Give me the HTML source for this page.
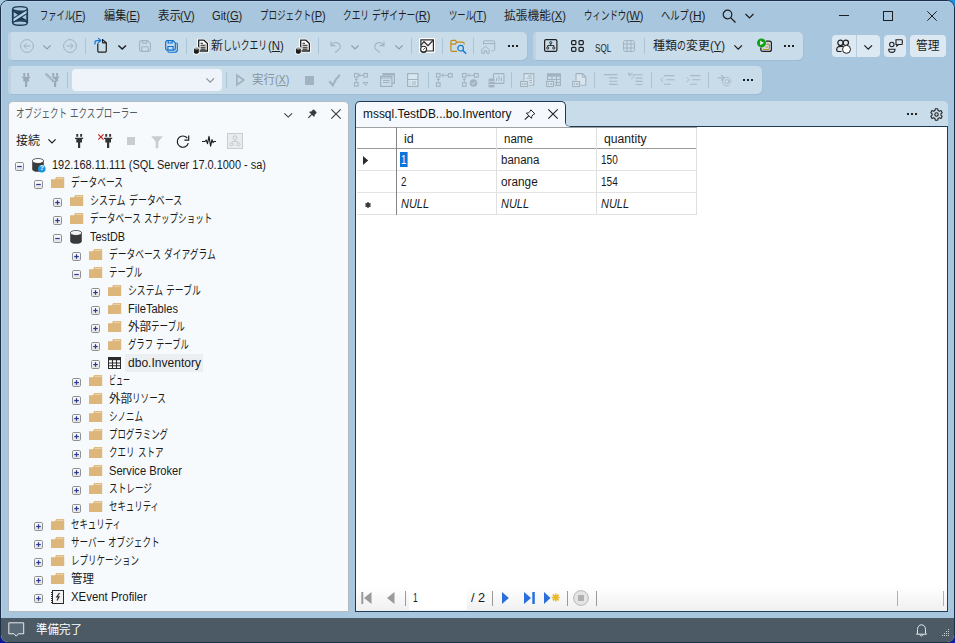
<!DOCTYPE html>
<html lang="ja"><head><meta charset="utf-8"><title>SSMS</title><style>
html,body{margin:0;padding:0}
body{width:955px;height:643px;overflow:hidden;position:relative;background:#a8c6dd;font-family:"Liberation Sans","Noto Sans CJK JP",sans-serif;}
.a{position:absolute;box-sizing:border-box}
.t{position:absolute;white-space:pre;line-height:16px;transform-origin:0 0}
u{text-decoration:underline;text-underline-offset:1px}
svg{overflow:visible}
</style></head><body>
<div class="a" style="left:0px;top:0px;width:955px;height:643px;background:#a8c8e2;"></div>
<div class="a" style="left:940px;top:0px;width:15px;height:15px;background:#1e90e2;"></div>
<div class="a" style="left:0px;top:628px;width:15px;height:15px;background:#0b1a9c;"></div>
<div class="a" style="left:940px;top:628px;width:15px;height:15px;background:#1c1c9e;"></div>
<div class="a" style="left:0px;top:0px;width:955px;height:643px;background:#a8c6dd;border:1px solid #1b3046;border-radius:8px;"></div>
<div class="a" style="left:1px;top:1px;width:953px;height:641px;border:1px solid #b4d2ea;border-radius:7px;border-right-color:#a8c6dd;border-bottom:none"></div>
<div class="a" style="left:1px;top:618px;width:953px;height:24px;background:#4b5a65;border-radius:0 0 7px 7px;"></div>
<svg class="a" style="left:11px;top:5px;" width="18" height="22" viewBox="0 0 18 22">
<path d="M1.700 3.900V18M16.300 3.900V18" stroke="#1d3c55" stroke-width="1.500"/>
<ellipse cx="9" cy="3.900" rx="7.300" ry="2.300" fill="none" stroke="#1d3c55" stroke-width="1.400"/>
<ellipse cx="9" cy="18" rx="7.300" ry="2.300" fill="none" stroke="#1d3c55" stroke-width="1.400"/>
<path d="M2 5.500C4 6.800 14 6.800 16 5.500L16 6.700L9 10.900L2 6.700z" fill="#1d3c55"/>
<path d="M2 16.400C4 15.100 14 15.100 16 16.400L16 15.200L9 10.900L2 15.200z" fill="#1d3c55"/>
<path d="M2 15.300L16 6.600" stroke="#1d3c55" stroke-width="4.400"/>
<path d="M1 15.900L17 6" stroke="#b4d3ea" stroke-width="2.300"/>
<path d="M1.700 3.900V18M16.300 3.900V18" stroke="#1d3c55" stroke-width="1.500"/>
</svg>
<span class="t" style="left:39.50px;top:8.14px;font-size:12px;color:#1e1e1e;transform:scaleX(0.6867);">ファイル</span><span class="t" style="left:72.47px;top:8.14px;font-size:12px;color:#1e1e1e;transform:scaleX(0.8816);">(<u>F</u>)</span>
<span class="t" style="left:103.50px;top:8.14px;font-size:12px;color:#1e1e1e;transform:scaleX(0.9304);">編集</span><span class="t" style="left:125.84px;top:8.14px;font-size:12px;color:#1e1e1e;transform:scaleX(0.8839);">(<u>E</u>)</span>
<span class="t" style="left:157.50px;top:8.14px;font-size:12px;color:#1e1e1e;transform:scaleX(0.9559);">表示</span><span class="t" style="left:180.46px;top:8.14px;font-size:12px;color:#1e1e1e;transform:scaleX(0.9081);">(<u>V</u>)</span>
<span class="t" style="left:212.00px;top:8.14px;font-size:12px;color:#1e1e1e;transform:scaleX(0.9270);">Git(<u>G</u>)</span>
<span class="t" style="left:259.50px;top:8.14px;font-size:12px;color:#1e1e1e;transform:scaleX(0.7118);">プロジェクト</span><span class="t" style="left:310.76px;top:8.14px;font-size:12px;color:#1e1e1e;transform:scaleX(0.9139);">(<u>P</u>)</span>
<span class="t" style="left:342.50px;top:8.14px;font-size:12px;color:#1e1e1e;transform:scaleX(0.7236);">クエリ</span><span class="t" style="left:368.56px;top:8.14px;font-size:12px;color:#1e1e1e;transform:scaleX(0.9289);"> </span><span class="t" style="left:371.67px;top:8.14px;font-size:12px;color:#1e1e1e;transform:scaleX(0.7236);">デザイナー</span><span class="t" style="left:414.91px;top:8.14px;font-size:12px;color:#1e1e1e;transform:scaleX(0.9289);">(<u>R</u>)</span>
<span class="t" style="left:448.50px;top:8.14px;font-size:12px;color:#1e1e1e;transform:scaleX(0.6910);">ツール</span><span class="t" style="left:473.39px;top:8.14px;font-size:12px;color:#1e1e1e;transform:scaleX(0.8871);">(<u>T</u>)</span>
<span class="t" style="left:504.30px;top:8.14px;font-size:12px;color:#1e1e1e;transform:scaleX(0.9758);">拡張機能</span><span class="t" style="left:551.15px;top:8.14px;font-size:12px;color:#1e1e1e;transform:scaleX(0.9270);">(<u>X</u>)</span>
<span class="t" style="left:583.50px;top:8.14px;font-size:12px;color:#1e1e1e;transform:scaleX(0.7049);">ウィンドウ</span><span class="t" style="left:625.81px;top:8.14px;font-size:12px;color:#1e1e1e;transform:scaleX(0.9050);">(<u>W</u>)</span>
<span class="t" style="left:661.00px;top:8.14px;font-size:12px;color:#1e1e1e;transform:scaleX(0.7715);">ヘルプ</span><span class="t" style="left:688.79px;top:8.14px;font-size:12px;color:#1e1e1e;transform:scaleX(0.9905);">(<u>H</u>)</span>
<svg class="a" style="left:722px;top:9px;" width="15" height="15" viewBox="0 0 15 15"><circle cx="5.500" cy="5.500" r="4.300" fill="none" stroke="#1e1e1e" stroke-width="1.200"/><path d="M8.600 8.600L13.500 13.500" stroke="#1e1e1e" stroke-width="1.300"/></svg>
<svg class="a" style="left:745px;top:13px;" width="9" height="6" viewBox="0 0 9 6"><path d="M.5 1l4 4 4-4" fill="none" stroke="#1e1e1e" stroke-width="1.200"/></svg>
<div class="a" style="left:839px;top:15px;width:10px;height:1px;background:#1e1e1e;"></div>
<div class="a" style="left:883px;top:11px;width:10px;height:10px;border:1px solid #1e1e1e"></div>
<svg class="a" style="left:927px;top:11px;" width="10" height="10" viewBox="0 0 10 10"><path d="M.3 .3L9.700 9.700M9.700 .3L.3 9.700" stroke="#1e1e1e" stroke-width="1"/></svg>
<div class="a" style="left:8px;top:32px;width:519px;height:28px;background:#c9dcea;border-radius:5px;box-shadow:.5px 1px 0 #9ebbd3;"></div>
<div class="a" style="left:8px;top:32px;width:3px;height:28px;background:#bed2e2;border-radius:5px 0 0 5px;"></div>
<div class="a" style="left:533px;top:32px;width:270px;height:28px;background:#c9dcea;border-radius:5px;box-shadow:.5px 1px 0 #9ebbd3;"></div>
<div class="a" style="left:533px;top:32px;width:3px;height:28px;background:#bed2e2;border-radius:5px 0 0 5px;"></div>
<svg class="a" style="left:20px;top:39px;" width="14" height="14" viewBox="0 0 14 14"><circle cx="7" cy="7" r="6.400" fill="none" stroke="#a2b2bf" stroke-width="1"/><path d="M10.500 7H4M6.500 4.300L3.800 7l2.700 2.700" fill="none" stroke="#a2b2bf" stroke-width="1"/></svg>
<svg class="a" style="left:43px;top:44.5px;" width="8" height="4.5" viewBox="0 0 8 4.5"><path d="M.4 .4L4.0 4.0L7.6 .4" fill="none" stroke="#8d9dab" stroke-width="1.2"/></svg>
<svg class="a" style="left:63px;top:39px;" width="14" height="14" viewBox="0 0 14 14"><circle cx="7" cy="7" r="6.400" fill="none" stroke="#a2b2bf" stroke-width="1"/><path d="M3.500 7H10M7.500 4.300L10.200 7l-2.700 2.700" fill="none" stroke="#a2b2bf" stroke-width="1"/></svg>
<div class="a" style="left:85px;top:38px;width:1px;height:16px;background:#adc2d3;"></div>
<svg class="a" style="left:93px;top:37px;" width="15" height="16" viewBox="0 0 15 16"><path d="M4.800 6.400V14.100a1 1 0 0 0 1 1H12.300a1 1 0 0 0 1-1V5.800L9.500 2.600H8.900" fill="none" stroke="#1e1e1e" stroke-width="1.200"/><path d="M9.500 2.700V4.900a.9 .9 0 0 0 .9 .9H13.200" fill="none" stroke="#1e1e1e" stroke-width="1.200"/>
<path d="M2 6.900V5.300C2 4.100 2.800 3.500 4 3.500H7.500M5.400 1.400L7.700 3.500L5.400 5.600" fill="none" stroke="#1477d4" stroke-width="1.250" stroke-linecap="round" stroke-linejoin="round"/></svg>
<svg class="a" style="left:118px;top:44.5px;" width="8.4" height="4.6" viewBox="0 0 8.4 4.6"><path d="M.4 .4L4.2 4.1L8.0 .4" fill="none" stroke="#1e1e1e" stroke-width="1.4"/></svg>
<svg class="a" style="left:138.7px;top:40.2px;" width="12" height="12" viewBox="0 0 12 12"><path d="M.6 2.400a1.800 1.800 0 0 1 1.800-1.800H8.600L11.400 3.400V9.600a1.800 1.800 0 0 1-1.800 1.800H2.400a1.800 1.800 0 0 1-1.800-1.800z" fill="none" stroke="#a3b3c0" stroke-width="1.1"/><path d="M3.600 .8V3.200H7.600V.8M2.800 11.200V7.300a.6 .6 0 0 1 .6-.6H8.600a.6 .6 0 0 1 .6 .6V11.200" fill="none" stroke="#a3b3c0" stroke-width="1.1"/></svg>
<svg class="a" style="left:164.7px;top:39.6px;" width="13" height="13" viewBox="0 0 13 13"><path d="M.7 2.200a1.600 1.600 0 0 1 1.600-1.600H8L10.300 2.900V8.600a1.600 1.600 0 0 1-1.600 1.600H2.300a1.600 1.600 0 0 1-1.600-1.600z" fill="none" stroke="#0f6fd0" stroke-width="1.200"/><path d="M3.200 .8V3H7.200V.8M2.900 10V6.500H8.100V10" fill="none" stroke="#0f6fd0" stroke-width="1.100"/><path d="M2.600 11.400c.4 .6 1 .9 1.700 .9H9.700a2.600 2.600 0 0 0 2.600-2.600V4.300c0-.6-.3-1.200-.8-1.600" fill="none" stroke="#0f6fd0" stroke-width="1.100"/></svg>
<div class="a" style="left:186px;top:38px;width:1px;height:16px;background:#adc2d3;"></div>
<svg class="a" style="left:193px;top:38.5px;" width="16" height="16" viewBox="0 0 16 16"><path d="M4.600 .5H11.300L15.300 4.300V12.800H4.600z" fill="#fff" stroke="#fff" stroke-width="1.400"/>
<path d="M5.700 1.200H11L14.400 4.500V12H5.700z" fill="#fff" stroke="#1e1e1e" stroke-width="1.300"/>
<path d="M7.500 4.300H10M7.500 6.300H12.600M7.500 8.200H12.600M7.500 10.100H12.600" stroke="#1e1e1e" stroke-width="1.100"/>
<path d="M.6 9.300v4.300c0 .9 1.200 1.500 2.700 1.500s2.700-.6 2.700-1.500V9.300" fill="#1e1e1e" stroke="#fff" stroke-width="1.100"/>
<ellipse cx="3.300" cy="9.300" rx="2.700" ry="1.400" fill="#9a9a9a" stroke="#fff" stroke-width=".8"/>
<path d="M.9 9.800v3.800c0 .7 1 1.200 2.400 1.200s2.400-.5 2.400-1.200V9.800c-.5 .5-1.300 .8-2.400 .8S1.400 10.300 .9 9.800z" fill="#1e1e1e"/></svg>
<span class="t" style="left:211.40px;top:38.44px;font-size:12px;color:#1e1e1e;transform:scaleX(0.9949);">新</span><span class="t" style="left:223.35px;top:38.44px;font-size:12px;color:#1e1e1e;transform:scaleX(0.7363);">しいクエリ</span><span class="t" style="left:267.54px;top:38.44px;font-size:12px;color:#1e1e1e;transform:scaleX(0.9452);">(<u>N</u>)</span>
<svg class="a" style="left:295px;top:38.5px;" width="16" height="16" viewBox="0 0 16 16"><path d="M4.600 .5H11.300L15.300 4.300V12.800H4.600z" fill="#fff" stroke="#fff" stroke-width="1.400"/>
<path d="M5.700 1.200H11L14.400 4.500V12H5.700z" fill="#fff" stroke="#1e1e1e" stroke-width="1.300"/>
<path d="M7.500 4.300H10M7.500 6.300H12.600M7.500 8.200H12.600M7.500 10.100H12.600" stroke="#1e1e1e" stroke-width="1.100"/>
<path d="M.6 9.300v4.300c0 .9 1.200 1.500 2.700 1.500s2.700-.6 2.700-1.500V9.300" fill="#1e1e1e" stroke="#fff" stroke-width="1.100"/>
<ellipse cx="3.300" cy="9.300" rx="2.700" ry="1.400" fill="#9a9a9a" stroke="#fff" stroke-width=".8"/>
<path d="M.9 9.800v3.800c0 .7 1 1.200 2.400 1.200s2.400-.5 2.400-1.200V9.800c-.5 .5-1.300 .8-2.400 .8S1.400 10.300 .9 9.800z" fill="#1e1e1e"/></svg>
<div class="a" style="left:318px;top:38px;width:1px;height:16px;background:#adc2d3;"></div>
<svg class="a" style="left:329.5px;top:39.5px;" width="12" height="13" viewBox="0 0 12 13"><path d="M1 1.200V5.600H5.400" fill="none" stroke="#a2b2bf" stroke-width="1.100"/><path d="M1.200 5.400C3 2.600 6 1.800 8.300 3.200c2.400 1.500 2.600 4.400 .7 6.200L5.200 12.500" fill="none" stroke="#a2b2bf" stroke-width="1.100"/></svg>
<svg class="a" style="left:350.7px;top:44.5px;" width="8" height="4.5" viewBox="0 0 8 4.5"><path d="M.4 .4L4.0 4.0L7.6 .4" fill="none" stroke="#8d9dab" stroke-width="1.2"/></svg>
<svg class="a" style="left:372.5px;top:39.5px;" width="12" height="13" viewBox="0 0 12 13"><path d="M11 1.200V5.600H6.600" fill="none" stroke="#a2b2bf" stroke-width="1.100"/><path d="M10.800 5.400C9 2.600 6 1.800 3.700 3.200c-2.400 1.500-2.600 4.400-.7 6.200L6.800 12.500" fill="none" stroke="#a2b2bf" stroke-width="1.100"/></svg>
<svg class="a" style="left:394.7px;top:44.5px;" width="8" height="4.5" viewBox="0 0 8 4.5"><path d="M.4 .4L4.0 4.0L7.6 .4" fill="none" stroke="#8d9dab" stroke-width="1.2"/></svg>
<div class="a" style="left:411px;top:38px;width:1px;height:16px;background:#adc2d3;"></div>
<svg class="a" style="left:419px;top:38px;" width="16" height="16" viewBox="0 0 16 16"><rect x="0" y="0" width="16" height="15" rx="1" fill="#fff"/>
<path d="M1.900 9V1.900H14.400V13H8" fill="#f6f6f6" stroke="#2a2a2a" stroke-width="1.200"/>
<path d="M1.900 7.200L5 3.700L9 7.600L13.900 2.500" fill="none" stroke="#2a2a2a" stroke-width="1.200"/>
<circle cx="4.600" cy="11.300" r="3" fill="#fff" stroke="#2a2a2a" stroke-width="1.100"/><path d="M2 12.800C3 14.800 6.200 14.800 7.200 12.800" fill="none" stroke="#2a2a2a" stroke-width="1.400"/><path d="M4.300 11.700L5.800 10.200" stroke="#2a2a2a" stroke-width="1"/></svg>
<div class="a" style="left:442px;top:38px;width:1px;height:16px;background:#adc2d3;"></div>
<svg class="a" style="left:449.5px;top:39px;" width="17" height="15" viewBox="0 0 17 15"><path d="M.9 11V2.600a1.300 1.300 0 0 1 1.300-1.300H5.300L6.800 3.200H12.800a1.300 1.300 0 0 1 1.300 1.300V5.600M.9 5.100H5.200L6.700 3.300M.9 11a1.300 1.300 0 0 0 1.300 1.300H7" fill="none" stroke="#c28a12" stroke-width="1.200"/>
<circle cx="10.600" cy="9.200" r="2.800" fill="none" stroke="#1477d4" stroke-width="1.200"/><path d="M12.700 11.300L16.200 14.700" stroke="#1477d4" stroke-width="1.400"/></svg>
<div class="a" style="left:473px;top:38px;width:1px;height:16px;background:#adc2d3;"></div>
<svg class="a" style="left:481px;top:40px;" width="15" height="14" viewBox="0 0 15 14"><path d="M2.500 4.500V2a1.200 1.200 0 0 1 1.200-1.200H12.500A1.200 1.200 0 0 1 13.700 2V9.500a1.200 1.200 0 0 1-1.200 1.200H10.500M2.500 3.600H13.700" fill="none" stroke="#a2b2bf" stroke-width="1"/><path d="M.8 9.500L4.500 6.300L8.200 9.500V13.300H5.700V10.800H3.300V13.300H.8z" fill="none" stroke="#a2b2bf" stroke-width="1"/></svg>
<div class="a" style="left:508px;top:45px;width:2px;height:2px;background:#1e1e1e;"></div>
<div class="a" style="left:512px;top:45px;width:2px;height:2px;background:#1e1e1e;"></div>
<div class="a" style="left:516px;top:45px;width:2px;height:2px;background:#1e1e1e;"></div>
<svg class="a" style="left:544px;top:39px;" width="14" height="13" viewBox="0 0 14 13"><rect x=".6" y=".6" width="12.300" height="11.800" rx="1.500" fill="none" stroke="#1e1e1e" stroke-width="1.200"/>
<circle cx="6.750" cy="3.700" r="1.100" fill="none" stroke="#1e1e1e" stroke-width=".9"/><circle cx="3.700" cy="9" r="1.100" fill="none" stroke="#1e1e1e" stroke-width=".9"/><circle cx="9.800" cy="9" r="1.100" fill="none" stroke="#1e1e1e" stroke-width=".9"/>
<path d="M6.750 4.800V6.500M3.700 7.900V6.500H9.800V7.900" fill="none" stroke="#1e1e1e" stroke-width=".9"/></svg>
<svg class="a" style="left:570.5px;top:40.2px;" width="13" height="12" viewBox="0 0 13 12"><rect x=".6" y=".6" width="4.300" height="4" rx="1" fill="none" stroke="#1e1e1e" stroke-width="1.200"/><rect x="8" y=".6" width="4.300" height="4" rx="1" fill="none" stroke="#1e1e1e" stroke-width="1.200"/><rect x=".6" y="7.300" width="4.300" height="4" rx="1" fill="none" stroke="#1e1e1e" stroke-width="1.200"/><rect x="8" y="7.300" width="4.300" height="4" rx="1" fill="none" stroke="#1e1e1e" stroke-width="1.200"/></svg>
<span class="t" style="left:594.70px;top:40.16px;font-size:10.5px;color:#1e1e1e;transform:scaleX(0.7756);">SQL</span>
<svg class="a" style="left:623px;top:40.2px;" width="12" height="12" viewBox="0 0 12 12"><rect x=".5" y=".5" width="11" height="11" rx="2" fill="none" stroke="#a2b2bf" stroke-width="1"/><path d="M4 .5V11.500M8 .5V11.500M.5 4H11.500M.5 8H11.500" stroke="#a2b2bf" stroke-width="1"/></svg>
<div class="a" style="left:644px;top:38px;width:1px;height:16px;background:#adc2d3;"></div>
<span class="t" style="left:653.20px;top:38.44px;font-size:12px;color:#1e1e1e;transform:scaleX(0.9953);">種類</span><span class="t" style="left:677.10px;top:38.44px;font-size:12px;color:#1e1e1e;transform:scaleX(0.7365);">の</span><span class="t" style="left:685.95px;top:38.44px;font-size:12px;color:#1e1e1e;transform:scaleX(0.9953);">変更</span><span class="t" style="left:709.86px;top:38.44px;font-size:12px;color:#1e1e1e;transform:scaleX(0.9456);">(<u>Y</u>)</span>
<svg class="a" style="left:734px;top:44.5px;" width="8.4" height="4.6" viewBox="0 0 8.4 4.6"><path d="M.4 .4L4.2 4.1L8.0 .4" fill="none" stroke="#1e1e1e" stroke-width="1.3"/></svg>
<svg class="a" style="left:757px;top:37.5px;" width="17" height="15" viewBox="0 0 17 15"><path d="M9 3.100H12.400a2 2 0 0 1 2 2V11.400a2 2 0 0 1-2 2H5.800a2 2 0 0 1-2-2V9.500" fill="none" stroke="#1e1e1e" stroke-width="1.200"/>
<path d="M9.500 6.100H11.200a1.200 1.200 0 0 1 1.200 1.200V10a1.500 1.500 0 0 1-1.500 1.500H7.200a1.500 1.500 0 0 1-1.300-.8M8.500 9H10.800" fill="none" stroke="#c28a12" stroke-width="1.100"/>
<circle cx="4.500" cy="4.900" r="4.500" fill="#12a01a"/><path d="M3.100 2.600V7.200L7 4.900z" fill="#e4f0e4"/></svg>
<div class="a" style="left:784px;top:45px;width:2px;height:2px;background:#1e1e1e;"></div>
<div class="a" style="left:788px;top:45px;width:2px;height:2px;background:#1e1e1e;"></div>
<div class="a" style="left:792px;top:45px;width:2px;height:2px;background:#1e1e1e;"></div>
<div class="a" style="left:832px;top:35px;width:48px;height:22px;background:#dde9f2;border-radius:4px;"></div>
<div class="a" style="left:856px;top:35px;width:1px;height:22px;background:#b9cddc;"></div>
<div class="a" style="left:884px;top:35px;width:22px;height:22px;background:#dde9f2;border-radius:4px;"></div>
<div class="a" style="left:910px;top:35px;width:36px;height:22px;background:#dde9f2;border-radius:4px;"></div>
<svg class="a" style="left:836px;top:39px;" width="16" height="15" viewBox="0 0 16 15"><circle cx="4.500" cy="3.800" r="2.700" fill="none" stroke="#1e1e1e" stroke-width="1.200"/><circle cx="9.800" cy="3.800" r="2.700" fill="none" stroke="#1e1e1e" stroke-width="1.200"/>
<path d="M5.500 12.500H2.500A1.800 1.800 0 0 1 .7 10.700C.7 8.500 2 7.300 4.500 7.300H7" fill="none" stroke="#1e1e1e" stroke-width="1.200"/>
<circle cx="10.500" cy="10.300" r="4" fill="#fff" stroke="#1e1e1e" stroke-width="1"/></svg>
<svg class="a" style="left:864px;top:44.5px;" width="8.4" height="4.6" viewBox="0 0 8.4 4.6"><path d="M.4 .4L4.2 4.1L8.0 .4" fill="none" stroke="#1e1e1e" stroke-width="1.3"/></svg>
<svg class="a" style="left:888px;top:39px;" width="15" height="14" viewBox="0 0 15 14"><circle cx="3.800" cy="5.500" r="2.200" fill="none" stroke="#1e1e1e" stroke-width="1.100"/><path d="M.7 10.200H7c0 2-1.300 3.200-3.150 3.200S.7 12.200 .7 10.200z" fill="none" stroke="#1e1e1e" stroke-width="1.100"/>
<path d="M8 .7H13.500a.8 .8 0 0 1 .8 .8V4.700a.8 .8 0 0 1-.8 .8H10.500L8.800 7V5.500H8z" fill="none" stroke="#1e1e1e" stroke-width="1.100"/></svg>
<span class="t" style="left:916.00px;top:38.44px;font-size:12px;color:#1e1e1e;transform:scaleX(0.9785);">管理</span>
<div class="a" style="left:8px;top:66px;width:754px;height:28px;background:#c9dcea;border-radius:5px;box-shadow:.5px 1px 0 #9ebbd3;"></div>
<div class="a" style="left:8px;top:66px;width:3px;height:28px;background:#bed2e2;border-radius:5px 0 0 5px;"></div>
<svg class="a" style="left:21.9px;top:73.2px;" width="8.2" height="14" viewBox="0 0 8.2 14"><path d="M1.300 0H3.200V3.6H1.300zM5.200 0H7.100V3.6H5.200zM0 3.700H8.200V5H7V8.600H5.200V13.900H3V8.600H1.300V5H0z" fill="#9aa9b5"/></svg>
<svg class="a" style="left:51.1px;top:73.2px;" width="8.2" height="14" viewBox="0 0 8.2 14"><path d="M1.300 0H3.200V3.6H1.300zM5.200 0H7.100V3.6H5.200zM0 3.700H8.200V5H7V8.600H5.200V13.900H3V8.600H1.300V5H0z" fill="#9aa9b5"/></svg>
<svg class="a" style="left:45px;top:73px;" width="10" height="10" viewBox="0 0 10 10"><path d="M.4 .4L9 8.600" stroke="#c9dcea" stroke-width="4.200"/><path d="M.6 .6L8.600 8.200" stroke="#9aa9b5" stroke-width="2.600" stroke-dasharray="1.100 .5"/><path d="M8 7L9.300 9.300L7 8.300z" fill="#9aa9b5"/><path d="M1.500 -.5L-.5 1.500" stroke="#c9dcea" stroke-width=".7"/></svg>
<div class="a" style="left:67px;top:72px;width:1px;height:16px;background:#adc2d3;"></div>
<div class="a" style="left:72px;top:69px;width:150px;height:22px;background:#eef4f9;border-radius:4px;"></div>
<svg class="a" style="left:206px;top:78.3px;" width="8.4" height="4.6" viewBox="0 0 8.4 4.6"><path d="M.4 .4L4.2 4.1L8.0 .4" fill="none" stroke="#8494a2" stroke-width="1.2"/></svg>
<div class="a" style="left:226px;top:72px;width:1px;height:16px;background:#adc2d3;"></div>
<svg class="a" style="left:236px;top:73.5px;" width="9" height="12" viewBox="0 0 9 12"><path d="M.9 1V11L7.800 6z" fill="none" stroke="#a0afbb" stroke-width="1.600"/></svg>
<span class="t" style="left:251.70px;top:72.44px;font-size:12px;color:#8595a3;transform:scaleX(0.9508);">実行</span><span class="t" style="left:274.53px;top:72.44px;font-size:12px;color:#8595a3;transform:scaleX(0.9033);">(<u>X</u>)</span>
<div class="a" style="left:304.5px;top:75.5px;width:9px;height:9px;background:#a2b2bf;"></div>
<svg class="a" style="left:328px;top:73.5px;" width="13" height="13" viewBox="0 0 13 13"><path d="M1.300 7.200L4.800 11.300C6.500 7 8.800 3.600 12 .8" fill="none" stroke="#a2b2bf" stroke-width="2.100"/></svg>
<svg class="a" style="left:353.5px;top:72.8px;" width="15" height="14" viewBox="0 0 15 14"><rect x="0.5" y="0.5" width="3.6" height="3.6" fill="none" stroke="#a2b2bf" stroke-width="1.100"/><rect x="9.8" y="0.5" width="3.6" height="3.6" fill="none" stroke="#a2b2bf" stroke-width="1.100"/><rect x="0.5" y="9.5" width="3.6" height="3.6" fill="none" stroke="#a2b2bf" stroke-width="1.100"/><path d="M4.100 2.300H9.800M6.300 .8L4.800 2.300L6.300 3.800M2.300 9.500V5.500M.9 7L2.300 5.500L3.700 7" fill="none" stroke="#a2b2bf" stroke-width="1"/><path d="M9 9.500H14L11.500 12.500z" fill="none" stroke="#a2b2bf" stroke-width="1"/></svg>
<svg class="a" style="left:379.5px;top:72.8px;" width="15" height="14" viewBox="0 0 15 14"><path d="M3.200 3.200V.6H14.400V10.200H12M3.200 1.900H14.400" fill="none" stroke="#a2b2bf" stroke-width="1.200"/><rect x=".6" y="3.400" width="11.300" height="10" fill="none" stroke="#a2b2bf" stroke-width="1.200"/><path d="M.6 5H11.900M3 7.500H9.500M3 9.500H9.500" fill="none" stroke="#a2b2bf" stroke-width="1.200"/></svg>
<svg class="a" style="left:407px;top:72.8px;" width="12" height="14" viewBox="0 0 12 14"><rect x=".6" y=".6" width="10.300" height="12.800" fill="#dbe7f0" stroke="#a2b2bf" stroke-width="1.200"/><path d="M.6 6.500H11M2.500 9H3.500M5 9H9M2.500 11H3.500M5 11H9" stroke="#a2b2bf" stroke-width="1.200"/></svg>
<div class="a" style="left:428px;top:72px;width:1px;height:16px;background:#adc2d3;"></div>
<svg class="a" style="left:435.5px;top:72.8px;" width="17" height="14" viewBox="0 0 17 14"><rect x="0.5" y="0.5" width="3.6" height="3.6" fill="none" stroke="#a2b2bf" stroke-width="1.100"/><rect x="12.4" y="0.5" width="3.8" height="3.6" fill="none" stroke="#a2b2bf" stroke-width="1.100"/><rect x="0.5" y="9.8" width="3.6" height="3.6" fill="none" stroke="#a2b2bf" stroke-width="1.100"/><path d="M5.500 2.300H12M7.500 .6L5.800 2.300L7.500 4M2.300 9.500V5.500M.8 7L2.300 5.500L3.800 7" fill="none" stroke="#a2b2bf" stroke-width="1"/></svg>
<svg class="a" style="left:461.5px;top:72.8px;" width="17" height="14" viewBox="0 0 17 14"><rect x="0.5" y="0.5" width="3.6" height="3.6" fill="none" stroke="#a2b2bf" stroke-width="1.100"/><rect x="12.4" y="0.5" width="3.8" height="3.6" fill="none" stroke="#a2b2bf" stroke-width="1.100"/><rect x="0.5" y="9.8" width="3.6" height="3.6" fill="none" stroke="#a2b2bf" stroke-width="1.100"/><path d="M5.500 2.300H12M7.500 .6L5.800 2.300L7.500 4M2.300 9.500V5.500M.8 7L2.300 5.500L3.800 7" fill="none" stroke="#a2b2bf" stroke-width="1"/><circle cx="11.500" cy="10" r="3.800" fill="#a2b2bf"/><path d="M9.600 10L11 11.500L13.500 8.700" fill="none" stroke="#c9dcea" stroke-width="1"/></svg>
<svg class="a" style="left:487.5px;top:72.5px;" width="17" height="15" viewBox="0 0 17 15"><rect x="5.500" y=".6" width="10.500" height="9.800" rx="1" fill="none" stroke="#a2b2bf" stroke-width="1.100"/><path d="M8.500 8V5M11 8V3M13.500 8V4.500" stroke="#a2b2bf" stroke-width="1"/><rect x=".5" y="5.500" width="6" height="9" rx="1.200" fill="#a2b2bf"/><path d="M.5 8.500H6.500M.5 11.500H6.500" stroke="#c9dcea" stroke-width=".8"/></svg>
<div class="a" style="left:511px;top:72px;width:1px;height:16px;background:#adc2d3;"></div>
<svg class="a" style="left:519.5px;top:72.8px;" width="15" height="14" viewBox="0 0 15 14"><path d="M4 7.500V.6H13.800V12.200H9" fill="#d8e5ef" stroke="#a2b2bf" stroke-width="1.100"/><path d="M8 3H12M6.500 5.200H12M9 7.400H12M9.500 9.600H12" stroke="#a2b2bf" stroke-width="1"/><rect x=".6" y="8.500" width="7" height="5" fill="#d3e1ec" stroke="#a2b2bf" stroke-width="1.100"/><path d="M2.500 10V12M4.800 10V12M5.800 10V12" stroke="#a2b2bf" stroke-width=".9"/></svg>
<svg class="a" style="left:545.5px;top:72.8px;" width="15" height="14" viewBox="0 0 15 14"><path d="M1.500 7.500V.8H14.400V12.400H9" fill="none" stroke="#a2b2bf" stroke-width="1.100"/><rect x="1.500" y=".8" width="12.900" height="2.800" fill="#a2b2bf"/><path d="M1.500 6.500H14.400M9 9.500H14.400M6 3.500V7.500M10.500 3.500V12.400" stroke="#a2b2bf" stroke-width="1.100"/><rect x=".6" y="8.500" width="7" height="5" fill="#d3e1ec" stroke="#a2b2bf" stroke-width="1.100"/><path d="M2.500 10V12M4.800 10V12M5.800 10V12" stroke="#a2b2bf" stroke-width=".9"/></svg>
<svg class="a" style="left:571.5px;top:72.8px;" width="15" height="14" viewBox="0 0 15 14"><path d="M4 7.500V.6H10.500L13.800 4V12.200H9" fill="#d8e5ef" stroke="#a2b2bf" stroke-width="1.100"/><path d="M10.300 .8V4.200H13.600" fill="none" stroke="#a2b2bf" stroke-width="1"/><rect x=".6" y="8.500" width="7" height="5" fill="#d3e1ec" stroke="#a2b2bf" stroke-width="1.100"/><path d="M2.500 10V12M4.800 10V12M5.800 10V12" stroke="#a2b2bf" stroke-width=".9"/></svg>
<div class="a" style="left:594px;top:72px;width:1px;height:16px;background:#adc2d3;"></div>
<svg class="a" style="left:603.5px;top:74px;" width="14" height="11" viewBox="0 0 14 11"><path d="M0 .6H13.500M5 3.900H13.500M5 7.200H13.500M5 10.400H13.500" stroke="#aab9c5" stroke-width="1.100"/></svg>
<svg class="a" style="left:627.5px;top:72px;" width="15" height="13" viewBox="0 0 15 13"><path d="M6 2.800H14.500M7.500 6.100H14.500M7.500 9.400H14.500M7.500 12.500H14.500" stroke="#aab9c5" stroke-width="1.100"/><path d="M.8 .3V3.200H3.600M1 3C2 1.300 4.500 1 5.500 2.500C6.300 3.800 5.300 5 3.500 6.800" fill="none" stroke="#aab9c5" stroke-width="1"/></svg>
<div class="a" style="left:651px;top:72px;width:1px;height:16px;background:#adc2d3;"></div>
<svg class="a" style="left:659.5px;top:75px;" width="15" height="10" viewBox="0 0 15 10"><path d="M4 .6H14.500M6 4.800H14.500M4 9.200H11" stroke="#aab9c5" stroke-width="1.100"/><path d="M3 2.500L.8 4.800L3 7.100" fill="none" stroke="#aab9c5" stroke-width="1"/></svg>
<svg class="a" style="left:685.5px;top:75px;" width="15" height="10" viewBox="0 0 15 10"><path d="M4 .6H14.500M6 4.800H14.500M4 9.200H11" stroke="#aab9c5" stroke-width="1.100"/><path d="M.8 2.500L3 4.800L.8 7.100" fill="none" stroke="#aab9c5" stroke-width="1"/></svg>
<div class="a" style="left:708px;top:72px;width:1px;height:16px;background:#adc2d3;"></div>
<svg class="a" style="left:717px;top:73.5px;" width="15" height="13" viewBox="0 0 15 13"><path d="M.5 3.800H6.500M4.200 1L7 3.800L4.200 6.600" fill="none" stroke="#aab9c5" stroke-width="1.200"/><circle cx="9.800" cy="7.600" r="2" fill="none" stroke="#aab9c5" stroke-width="1"/><path d="M11.800 5.600V8.600C11.800 9.800 13.800 9.800 13.800 7.600C13.800 5 12 3.300 9.800 3.300C7.300 3.300 5.500 5.200 5.500 7.600C5.500 10 7.300 11.900 9.800 11.900C10.800 11.900 11.600 11.700 12.300 11.200" fill="none" stroke="#aab9c5" stroke-width=".9"/></svg>
<div class="a" style="left:743px;top:79px;width:2px;height:2px;background:#1e1e1e;"></div>
<div class="a" style="left:747px;top:79px;width:2px;height:2px;background:#1e1e1e;"></div>
<div class="a" style="left:751px;top:79px;width:2px;height:2px;background:#1e1e1e;"></div>
<div class="a" style="left:8px;top:101px;width:341px;height:511px;background:#f6fafd;border:1px solid #b3bcc4;border-radius:5px 5px 0 0;"></div>
<span class="t" style="left:16.20px;top:106.44px;font-size:12px;color:#555b61;transform:scaleX(0.7094);">オブジェクト</span><span class="t" style="left:67.29px;top:106.44px;font-size:12px;color:#555b61;transform:scaleX(0.9108);"> </span><span class="t" style="left:70.34px;top:106.44px;font-size:12px;color:#555b61;transform:scaleX(0.7094);">エクスプローラー</span>
<svg class="a" style="left:284px;top:112.6px;" width="8.5" height="4.6" viewBox="0 0 8.5 4.6"><path d="M.4 .4L4.25 4.1L8.1 .4" fill="none" stroke="#3a3a3a" stroke-width="1.1"/></svg>
<svg class="a" style="left:306px;top:109px;" width="12" height="11" viewBox="0 0 12 11"><g transform="rotate(45 6.850 4.300)" fill="#3a3a3a"><rect x="4.450" y=".9" width="4.800" height="4.800" rx=".9"/><rect x="3.450" y="4.600" width="6.800" height="1.500" rx=".5"/><rect x="6.250" y="5.800" width="1.200" height="4.900"/></g></svg>
<svg class="a" style="left:331px;top:109px;" width="10" height="10" viewBox="0 0 10 10"><path d="M.3 .3L9.700 9.700M9.700 .3L.3 9.700" stroke="#3a3a3a" stroke-width="1.100"/></svg>
<span class="t" style="left:16.20px;top:133.24px;font-size:12px;color:#1e1e1e;transform:scaleX(0.9993);">接続</span>
<svg class="a" style="left:48.2px;top:139.2px;" width="8" height="4.5" viewBox="0 0 8 4.5"><path d="M.4 .4L4.0 4.0L7.6 .4" fill="none" stroke="#1e1e1e" stroke-width="1.2"/></svg>
<svg class="a" style="left:74.8px;top:134px;" width="8.2" height="14" viewBox="0 0 8.2 14"><path d="M1.300 0H3.200V2.7H1.300zM5.200 0H7.100V2.7H5.200zM0 3.700H8.200V5H7V8.600H5.200V13.900H3V8.600H1.300V5H0z" fill="#333"/></svg>
<svg class="a" style="left:103.8px;top:134px;" width="8.2" height="14" viewBox="0 0 8.2 14"><path d="M1.300 0H3.200V2.7H1.300zM5.200 0H7.100V2.7H5.200zM0 3.700H8.200V5H7V8.600H5.200V13.900H3V8.600H1.300V5H0z" fill="#333"/></svg>
<svg class="a" style="left:98px;top:134px;" width="6" height="6" viewBox="0 0 6 6"><path d="M.3 .3L5.500 5.700M5.500 .3L.3 5.700" stroke="#c0281c" stroke-width="1.200"/></svg>
<div class="a" style="left:127px;top:137px;width:8px;height:8px;background:#c9cdd1;"></div>
<svg class="a" style="left:151px;top:135.5px;" width="12" height="13" viewBox="0 0 12 13"><path d="M.2 .3H11.800L7.300 5.800V12.300H4.700V5.800z" fill="#c9cdd1"/></svg>
<svg class="a" style="left:176px;top:134.5px;" width="14" height="13" viewBox="0 0 14 13"><path d="M12.310 8.050A5.600 5.600 0 1 1 11.190 3" fill="none" stroke="#1e1e1e" stroke-width="1.200"/><path d="M12.700 .6V5.100H8.400" fill="none" stroke="#1e1e1e" stroke-width="1.200"/></svg>
<svg class="a" style="left:202px;top:135.5px;" width="14" height="11" viewBox="0 0 14 11"><path d="M0 5.500H3L4.200 4L5.500 7.600L7 .3L8.600 10.200L10 3.600L11 6.600L11.800 5.500H14" fill="none" stroke="#1e1e1e" stroke-width="1.150" stroke-linejoin="round"/></svg>
<svg class="a" style="left:227px;top:133px;" width="16" height="16" viewBox="0 0 16 16"><rect x=".5" y=".5" width="15" height="15" fill="#e9ecef" stroke="#c9cdd1"/><rect x="6.300" y="3" width="3.400" height="3.400" rx="1" fill="none" stroke="#c3c8cd"/><circle cx="4.600" cy="11.300" r="1.600" fill="none" stroke="#c3c8cd"/><circle cx="11.400" cy="11.300" r="1.600" fill="none" stroke="#c3c8cd"/><path d="M8 6.400V8.400M4.600 9.700C4.600 8.400 6 8.400 8 8.400S11.400 8.400 11.400 9.700" fill="none" stroke="#c3c8cd"/></svg>
<svg class="a" style="left:15.0px;top:162.0px;" width="9" height="9" viewBox="0 0 9 9"><rect x=".5" y=".5" width="8" height="8" rx="1.200" fill="#f7f7f7" stroke="#8f8f8f"/><rect x="1" y="5" width="7" height="3" fill="#e6e6e6"/><path d="M2.200 4.500H6.800" stroke="#2a3a9c" stroke-width="1.200"/></svg>
<svg class="a" style="left:32px;top:157.8px;" width="12" height="14" viewBox="0 0 12 14"><path d="M.2 2.800V11.200C.2 12.700 2.800 13.800 6 13.800S11.800 12.700 11.800 11.200V2.800z" fill="#3a3a3a"/><ellipse cx="6" cy="2.900" rx="5.600" ry="2.400" fill="#fff" stroke="#3a3a3a" stroke-width=".8"/><ellipse cx="6" cy="3" rx="4.600" ry="1.600" fill="#fff"/></svg>
<svg class="a" style="left:37.7px;top:164.60000000000002px;" width="7.6" height="7.6" viewBox="0 0 7.6 7.6"><circle cx="3.800" cy="3.800" r="3.800" fill="#1a96e4"/></svg>
<span class="t" style="left:39.7px;top:160.10000000000002px;font-size:7px;font-weight:bold;color:#fff;">?</span>
<span class="t" style="left:52.00px;top:156.54px;font-size:12px;color:#1a1a1a;transform:scaleX(0.9131);">192.168.11.111 (SQL Server 17.0.1000 - sa)</span>
<svg class="a" style="left:34.0px;top:180.0px;" width="9" height="9" viewBox="0 0 9 9"><rect x=".5" y=".5" width="8" height="8" rx="1.200" fill="#f7f7f7" stroke="#8f8f8f"/><rect x="1" y="5" width="7" height="3" fill="#e6e6e6"/><path d="M2.200 4.500H6.800" stroke="#2a3a9c" stroke-width="1.200"/></svg>
<svg class="a" style="left:51px;top:177.0px;" width="14" height="11" viewBox="0 0 14 11"><path d="M0 2.300H4.200L5 0H13.200V11H0z" fill="#dcb67a"/><path d="M5.800 1.300H12.500" stroke="#efdcb9" stroke-width=".9"/></svg>
<span class="t" style="left:71.00px;top:174.54px;font-size:12px;color:#1a1a1a;transform:scaleX(0.7282);">データベース</span>
<svg class="a" style="left:53.0px;top:198.0px;" width="9" height="9" viewBox="0 0 9 9"><rect x=".5" y=".5" width="8" height="8" rx="1.200" fill="#f7f7f7" stroke="#8f8f8f"/><rect x="1" y="5" width="7" height="3" fill="#e6e6e6"/><path d="M2.200 4.500H6.800" stroke="#2a3a9c" stroke-width="1.200"/><path d="M4.500 2.200V6.800" stroke="#2a3a9c" stroke-width="1.200"/></svg>
<svg class="a" style="left:70px;top:195.0px;" width="14" height="11" viewBox="0 0 14 11"><path d="M0 2.300H4.200L5 0H13.200V11H0z" fill="#dcb67a"/><path d="M5.800 1.300H12.500" stroke="#efdcb9" stroke-width=".9"/></svg>
<span class="t" style="left:90.00px;top:192.54px;font-size:12px;color:#1a1a1a;transform:scaleX(0.7459);">システム</span><span class="t" style="left:125.54px;top:192.54px;font-size:12px;color:#1a1a1a;transform:scaleX(0.9576);"> </span><span class="t" style="left:128.74px;top:192.54px;font-size:12px;color:#1a1a1a;transform:scaleX(0.7459);">データベース</span>
<svg class="a" style="left:53.0px;top:216.0px;" width="9" height="9" viewBox="0 0 9 9"><rect x=".5" y=".5" width="8" height="8" rx="1.200" fill="#f7f7f7" stroke="#8f8f8f"/><rect x="1" y="5" width="7" height="3" fill="#e6e6e6"/><path d="M2.200 4.500H6.800" stroke="#2a3a9c" stroke-width="1.200"/><path d="M4.500 2.200V6.800" stroke="#2a3a9c" stroke-width="1.200"/></svg>
<svg class="a" style="left:70px;top:213.0px;" width="14" height="11" viewBox="0 0 14 11"><path d="M0 2.300H4.200L5 0H13.200V11H0z" fill="#dcb67a"/><path d="M5.800 1.300H12.500" stroke="#efdcb9" stroke-width=".9"/></svg>
<span class="t" style="left:90.00px;top:210.54px;font-size:12px;color:#1a1a1a;transform:scaleX(0.7105);">データベース</span><span class="t" style="left:140.73px;top:210.54px;font-size:12px;color:#1a1a1a;transform:scaleX(0.9121);"> </span><span class="t" style="left:143.78px;top:210.54px;font-size:12px;color:#1a1a1a;transform:scaleX(0.7105);">スナップショット</span>
<svg class="a" style="left:53.0px;top:234.0px;" width="9" height="9" viewBox="0 0 9 9"><rect x=".5" y=".5" width="8" height="8" rx="1.200" fill="#f7f7f7" stroke="#8f8f8f"/><rect x="1" y="5" width="7" height="3" fill="#e6e6e6"/><path d="M2.200 4.500H6.800" stroke="#2a3a9c" stroke-width="1.200"/></svg>
<svg class="a" style="left:69.7px;top:229.7px;" width="12" height="14" viewBox="0 0 12 14"><path d="M.2 2.800V11.200C.2 12.700 2.800 13.800 6 13.800S11.800 12.700 11.800 11.200V2.800z" fill="#3a3a3a"/><ellipse cx="6" cy="2.900" rx="5.600" ry="2.400" fill="#fff" stroke="#3a3a3a" stroke-width=".8"/><ellipse cx="6" cy="3" rx="4.600" ry="1.600" fill="#f4f4f4"/></svg>
<span class="t" style="left:90.00px;top:228.54px;font-size:12px;color:#1a1a1a;transform:scaleX(0.9047);">TestDB</span>
<svg class="a" style="left:72.0px;top:252.0px;" width="9" height="9" viewBox="0 0 9 9"><rect x=".5" y=".5" width="8" height="8" rx="1.200" fill="#f7f7f7" stroke="#8f8f8f"/><rect x="1" y="5" width="7" height="3" fill="#e6e6e6"/><path d="M2.200 4.500H6.800" stroke="#2a3a9c" stroke-width="1.200"/><path d="M4.500 2.200V6.800" stroke="#2a3a9c" stroke-width="1.200"/></svg>
<svg class="a" style="left:89px;top:249.0px;" width="14" height="11" viewBox="0 0 14 11"><path d="M0 2.300H4.200L5 0H13.200V11H0z" fill="#dcb67a"/><path d="M5.800 1.300H12.500" stroke="#efdcb9" stroke-width=".9"/></svg>
<span class="t" style="left:109.00px;top:246.54px;font-size:12px;color:#1a1a1a;transform:scaleX(0.7292);">データベース</span><span class="t" style="left:161.07px;top:246.54px;font-size:12px;color:#1a1a1a;transform:scaleX(0.9361);"> </span><span class="t" style="left:164.20px;top:246.54px;font-size:12px;color:#1a1a1a;transform:scaleX(0.7292);">ダイアグラム</span>
<svg class="a" style="left:72.0px;top:270.0px;" width="9" height="9" viewBox="0 0 9 9"><rect x=".5" y=".5" width="8" height="8" rx="1.200" fill="#f7f7f7" stroke="#8f8f8f"/><rect x="1" y="5" width="7" height="3" fill="#e6e6e6"/><path d="M2.200 4.500H6.800" stroke="#2a3a9c" stroke-width="1.200"/></svg>
<svg class="a" style="left:89px;top:267.0px;" width="14" height="11" viewBox="0 0 14 11"><path d="M0 2.300H4.200L5 0H13.200V11H0z" fill="#dcb67a"/><path d="M5.800 1.300H12.500" stroke="#efdcb9" stroke-width=".9"/></svg>
<span class="t" style="left:109.00px;top:264.54px;font-size:12px;color:#1a1a1a;transform:scaleX(0.6980);">テーブル</span>
<svg class="a" style="left:91.0px;top:288.0px;" width="9" height="9" viewBox="0 0 9 9"><rect x=".5" y=".5" width="8" height="8" rx="1.200" fill="#f7f7f7" stroke="#8f8f8f"/><rect x="1" y="5" width="7" height="3" fill="#e6e6e6"/><path d="M2.200 4.500H6.800" stroke="#2a3a9c" stroke-width="1.200"/><path d="M4.500 2.200V6.800" stroke="#2a3a9c" stroke-width="1.200"/></svg>
<svg class="a" style="left:108px;top:285.0px;" width="14" height="11" viewBox="0 0 14 11"><path d="M0 2.300H4.200L5 0H13.200V11H0z" fill="#dcb67a"/><path d="M5.800 1.300H12.500" stroke="#efdcb9" stroke-width=".9"/></svg>
<span class="t" style="left:128.00px;top:282.54px;font-size:12px;color:#1a1a1a;transform:scaleX(0.7358);">システム</span><span class="t" style="left:163.05px;top:282.54px;font-size:12px;color:#1a1a1a;transform:scaleX(0.9446);"> </span><span class="t" style="left:166.21px;top:282.54px;font-size:12px;color:#1a1a1a;transform:scaleX(0.7358);">テーブル</span>
<svg class="a" style="left:91.0px;top:306.0px;" width="9" height="9" viewBox="0 0 9 9"><rect x=".5" y=".5" width="8" height="8" rx="1.200" fill="#f7f7f7" stroke="#8f8f8f"/><rect x="1" y="5" width="7" height="3" fill="#e6e6e6"/><path d="M2.200 4.500H6.800" stroke="#2a3a9c" stroke-width="1.200"/><path d="M4.500 2.200V6.800" stroke="#2a3a9c" stroke-width="1.200"/></svg>
<svg class="a" style="left:108px;top:303.0px;" width="14" height="11" viewBox="0 0 14 11"><path d="M0 2.300H4.200L5 0H13.200V11H0z" fill="#dcb67a"/><path d="M5.800 1.300H12.500" stroke="#efdcb9" stroke-width=".9"/></svg>
<span class="t" style="left:128.00px;top:300.54px;font-size:12px;color:#1a1a1a;transform:scaleX(0.9254);">FileTables</span>
<svg class="a" style="left:91.0px;top:324.0px;" width="9" height="9" viewBox="0 0 9 9"><rect x=".5" y=".5" width="8" height="8" rx="1.200" fill="#f7f7f7" stroke="#8f8f8f"/><rect x="1" y="5" width="7" height="3" fill="#e6e6e6"/><path d="M2.200 4.500H6.800" stroke="#2a3a9c" stroke-width="1.200"/><path d="M4.500 2.200V6.800" stroke="#2a3a9c" stroke-width="1.200"/></svg>
<svg class="a" style="left:108px;top:321.0px;" width="14" height="11" viewBox="0 0 14 11"><path d="M0 2.300H4.200L5 0H13.200V11H0z" fill="#dcb67a"/><path d="M5.800 1.300H12.500" stroke="#efdcb9" stroke-width=".9"/></svg>
<span class="t" style="left:128.00px;top:318.54px;font-size:12px;color:#1a1a1a;transform:scaleX(0.9660);">外部</span><span class="t" style="left:151.20px;top:318.54px;font-size:12px;color:#1a1a1a;transform:scaleX(0.7149);">テーブル</span>
<svg class="a" style="left:91.0px;top:342.0px;" width="9" height="9" viewBox="0 0 9 9"><rect x=".5" y=".5" width="8" height="8" rx="1.200" fill="#f7f7f7" stroke="#8f8f8f"/><rect x="1" y="5" width="7" height="3" fill="#e6e6e6"/><path d="M2.200 4.500H6.800" stroke="#2a3a9c" stroke-width="1.200"/><path d="M4.500 2.200V6.800" stroke="#2a3a9c" stroke-width="1.200"/></svg>
<svg class="a" style="left:108px;top:339.0px;" width="14" height="11" viewBox="0 0 14 11"><path d="M0 2.300H4.200L5 0H13.200V11H0z" fill="#dcb67a"/><path d="M5.800 1.300H12.500" stroke="#efdcb9" stroke-width=".9"/></svg>
<span class="t" style="left:128.00px;top:336.54px;font-size:12px;color:#1a1a1a;transform:scaleX(0.6964);">グラフ</span><span class="t" style="left:153.08px;top:336.54px;font-size:12px;color:#1a1a1a;transform:scaleX(0.8941);"> </span><span class="t" style="left:156.07px;top:336.54px;font-size:12px;color:#1a1a1a;transform:scaleX(0.6964);">テーブル</span>
<svg class="a" style="left:91.0px;top:360.0px;" width="9" height="9" viewBox="0 0 9 9"><rect x=".5" y=".5" width="8" height="8" rx="1.200" fill="#f7f7f7" stroke="#8f8f8f"/><rect x="1" y="5" width="7" height="3" fill="#e6e6e6"/><path d="M2.200 4.500H6.800" stroke="#2a3a9c" stroke-width="1.200"/><path d="M4.500 2.200V6.800" stroke="#2a3a9c" stroke-width="1.200"/></svg>
<svg class="a" style="left:107.8px;top:356.9px;" width="13" height="12" viewBox="0 0 13 12"><rect x=".5" y=".5" width="12" height="11" fill="#fff" stroke="#2b2b2b"/><rect x=".5" y=".5" width="12" height="2.700" fill="#2b2b2b"/><path d="M.5 6H12.500M.5 8.800H12.500M4.500 3V11.500M8.500 3V11.500" stroke="#2b2b2b" stroke-width="1.100"/></svg>
<div class="a" style="left:125px;top:354.0px;width:78px;height:18px;background:#eceff1;"></div>
<span class="t" style="left:128.00px;top:354.54px;font-size:12px;color:#1a1a1a;transform:scaleX(1.0039);">dbo.Inventory</span>
<svg class="a" style="left:72.0px;top:378.0px;" width="9" height="9" viewBox="0 0 9 9"><rect x=".5" y=".5" width="8" height="8" rx="1.200" fill="#f7f7f7" stroke="#8f8f8f"/><rect x="1" y="5" width="7" height="3" fill="#e6e6e6"/><path d="M2.200 4.500H6.800" stroke="#2a3a9c" stroke-width="1.200"/><path d="M4.500 2.200V6.800" stroke="#2a3a9c" stroke-width="1.200"/></svg>
<svg class="a" style="left:89px;top:375.0px;" width="14" height="11" viewBox="0 0 14 11"><path d="M0 2.300H4.200L5 0H13.200V11H0z" fill="#dcb67a"/><path d="M5.800 1.300H12.500" stroke="#efdcb9" stroke-width=".9"/></svg>
<span class="t" style="left:109.00px;top:372.54px;font-size:12px;color:#1a1a1a;transform:scaleX(0.5831);">ビュー</span>
<svg class="a" style="left:72.0px;top:396.0px;" width="9" height="9" viewBox="0 0 9 9"><rect x=".5" y=".5" width="8" height="8" rx="1.200" fill="#f7f7f7" stroke="#8f8f8f"/><rect x="1" y="5" width="7" height="3" fill="#e6e6e6"/><path d="M2.200 4.500H6.800" stroke="#2a3a9c" stroke-width="1.200"/><path d="M4.500 2.200V6.800" stroke="#2a3a9c" stroke-width="1.200"/></svg>
<svg class="a" style="left:89px;top:393.0px;" width="14" height="11" viewBox="0 0 14 11"><path d="M0 2.300H4.200L5 0H13.200V11H0z" fill="#dcb67a"/><path d="M5.800 1.300H12.500" stroke="#efdcb9" stroke-width=".9"/></svg>
<span class="t" style="left:109.00px;top:390.54px;font-size:12px;color:#1a1a1a;transform:scaleX(0.9645);">外部</span><span class="t" style="left:132.16px;top:390.54px;font-size:12px;color:#1a1a1a;transform:scaleX(0.7138);">リソース</span>
<svg class="a" style="left:72.0px;top:414.0px;" width="9" height="9" viewBox="0 0 9 9"><rect x=".5" y=".5" width="8" height="8" rx="1.200" fill="#f7f7f7" stroke="#8f8f8f"/><rect x="1" y="5" width="7" height="3" fill="#e6e6e6"/><path d="M2.200 4.500H6.800" stroke="#2a3a9c" stroke-width="1.200"/><path d="M4.500 2.200V6.800" stroke="#2a3a9c" stroke-width="1.200"/></svg>
<svg class="a" style="left:89px;top:411.0px;" width="14" height="11" viewBox="0 0 14 11"><path d="M0 2.300H4.200L5 0H13.200V11H0z" fill="#dcb67a"/><path d="M5.800 1.300H12.500" stroke="#efdcb9" stroke-width=".9"/></svg>
<span class="t" style="left:109.00px;top:408.54px;font-size:12px;color:#1a1a1a;transform:scaleX(0.7081);">シノニム</span>
<svg class="a" style="left:72.0px;top:432.0px;" width="9" height="9" viewBox="0 0 9 9"><rect x=".5" y=".5" width="8" height="8" rx="1.200" fill="#f7f7f7" stroke="#8f8f8f"/><rect x="1" y="5" width="7" height="3" fill="#e6e6e6"/><path d="M2.200 4.500H6.800" stroke="#2a3a9c" stroke-width="1.200"/><path d="M4.500 2.200V6.800" stroke="#2a3a9c" stroke-width="1.200"/></svg>
<svg class="a" style="left:89px;top:429.0px;" width="14" height="11" viewBox="0 0 14 11"><path d="M0 2.300H4.200L5 0H13.200V11H0z" fill="#dcb67a"/><path d="M5.800 1.300H12.500" stroke="#efdcb9" stroke-width=".9"/></svg>
<span class="t" style="left:109.00px;top:426.54px;font-size:12px;color:#1a1a1a;transform:scaleX(0.7023);">プログラミング</span>
<svg class="a" style="left:72.0px;top:450.0px;" width="9" height="9" viewBox="0 0 9 9"><rect x=".5" y=".5" width="8" height="8" rx="1.200" fill="#f7f7f7" stroke="#8f8f8f"/><rect x="1" y="5" width="7" height="3" fill="#e6e6e6"/><path d="M2.200 4.500H6.800" stroke="#2a3a9c" stroke-width="1.200"/><path d="M4.500 2.200V6.800" stroke="#2a3a9c" stroke-width="1.200"/></svg>
<svg class="a" style="left:89px;top:447.0px;" width="14" height="11" viewBox="0 0 14 11"><path d="M0 2.300H4.200L5 0H13.200V11H0z" fill="#dcb67a"/><path d="M5.800 1.300H12.500" stroke="#efdcb9" stroke-width=".9"/></svg>
<span class="t" style="left:109.00px;top:444.54px;font-size:12px;color:#1a1a1a;transform:scaleX(0.7075);">クエリ</span><span class="t" style="left:134.48px;top:444.54px;font-size:12px;color:#1a1a1a;transform:scaleX(0.9083);"> </span><span class="t" style="left:137.52px;top:444.54px;font-size:12px;color:#1a1a1a;transform:scaleX(0.7075);">ストア</span>
<svg class="a" style="left:72.0px;top:468.0px;" width="9" height="9" viewBox="0 0 9 9"><rect x=".5" y=".5" width="8" height="8" rx="1.200" fill="#f7f7f7" stroke="#8f8f8f"/><rect x="1" y="5" width="7" height="3" fill="#e6e6e6"/><path d="M2.200 4.500H6.800" stroke="#2a3a9c" stroke-width="1.200"/><path d="M4.500 2.200V6.800" stroke="#2a3a9c" stroke-width="1.200"/></svg>
<svg class="a" style="left:89px;top:465.0px;" width="14" height="11" viewBox="0 0 14 11"><path d="M0 2.300H4.200L5 0H13.200V11H0z" fill="#dcb67a"/><path d="M5.800 1.300H12.500" stroke="#efdcb9" stroke-width=".9"/></svg>
<span class="t" style="left:109.00px;top:462.54px;font-size:12px;color:#1a1a1a;transform:scaleX(0.9275);">Service Broker</span>
<svg class="a" style="left:72.0px;top:486.0px;" width="9" height="9" viewBox="0 0 9 9"><rect x=".5" y=".5" width="8" height="8" rx="1.200" fill="#f7f7f7" stroke="#8f8f8f"/><rect x="1" y="5" width="7" height="3" fill="#e6e6e6"/><path d="M2.200 4.500H6.800" stroke="#2a3a9c" stroke-width="1.200"/><path d="M4.500 2.200V6.800" stroke="#2a3a9c" stroke-width="1.200"/></svg>
<svg class="a" style="left:89px;top:483.0px;" width="14" height="11" viewBox="0 0 14 11"><path d="M0 2.300H4.200L5 0H13.200V11H0z" fill="#dcb67a"/><path d="M5.800 1.300H12.500" stroke="#efdcb9" stroke-width=".9"/></svg>
<span class="t" style="left:109.00px;top:480.54px;font-size:12px;color:#1a1a1a;transform:scaleX(0.7195);">ストレージ</span>
<svg class="a" style="left:72.0px;top:504.0px;" width="9" height="9" viewBox="0 0 9 9"><rect x=".5" y=".5" width="8" height="8" rx="1.200" fill="#f7f7f7" stroke="#8f8f8f"/><rect x="1" y="5" width="7" height="3" fill="#e6e6e6"/><path d="M2.200 4.500H6.800" stroke="#2a3a9c" stroke-width="1.200"/><path d="M4.500 2.200V6.800" stroke="#2a3a9c" stroke-width="1.200"/></svg>
<svg class="a" style="left:89px;top:501.0px;" width="14" height="11" viewBox="0 0 14 11"><path d="M0 2.300H4.200L5 0H13.200V11H0z" fill="#dcb67a"/><path d="M5.800 1.300H12.500" stroke="#efdcb9" stroke-width=".9"/></svg>
<span class="t" style="left:109.00px;top:498.54px;font-size:12px;color:#1a1a1a;transform:scaleX(0.7014);">セキュリティ</span>
<svg class="a" style="left:34.0px;top:522.0px;" width="9" height="9" viewBox="0 0 9 9"><rect x=".5" y=".5" width="8" height="8" rx="1.200" fill="#f7f7f7" stroke="#8f8f8f"/><rect x="1" y="5" width="7" height="3" fill="#e6e6e6"/><path d="M2.200 4.500H6.800" stroke="#2a3a9c" stroke-width="1.200"/><path d="M4.500 2.200V6.800" stroke="#2a3a9c" stroke-width="1.200"/></svg>
<svg class="a" style="left:51px;top:519.0px;" width="14" height="11" viewBox="0 0 14 11"><path d="M0 2.300H4.200L5 0H13.200V11H0z" fill="#dcb67a"/><path d="M5.800 1.300H12.500" stroke="#efdcb9" stroke-width=".9"/></svg>
<span class="t" style="left:71.00px;top:516.54px;font-size:12px;color:#1a1a1a;transform:scaleX(0.7014);">セキュリティ</span>
<svg class="a" style="left:34.0px;top:540.0px;" width="9" height="9" viewBox="0 0 9 9"><rect x=".5" y=".5" width="8" height="8" rx="1.200" fill="#f7f7f7" stroke="#8f8f8f"/><rect x="1" y="5" width="7" height="3" fill="#e6e6e6"/><path d="M2.200 4.500H6.800" stroke="#2a3a9c" stroke-width="1.200"/><path d="M4.500 2.200V6.800" stroke="#2a3a9c" stroke-width="1.200"/></svg>
<svg class="a" style="left:51px;top:537.0px;" width="14" height="11" viewBox="0 0 14 11"><path d="M0 2.300H4.200L5 0H13.200V11H0z" fill="#dcb67a"/><path d="M5.800 1.300H12.500" stroke="#efdcb9" stroke-width=".9"/></svg>
<span class="t" style="left:71.00px;top:534.54px;font-size:12px;color:#1a1a1a;transform:scaleX(0.7166);">サーバー</span><span class="t" style="left:105.32px;top:534.54px;font-size:12px;color:#1a1a1a;transform:scaleX(0.9199);"> </span><span class="t" style="left:108.39px;top:534.54px;font-size:12px;color:#1a1a1a;transform:scaleX(0.7166);">オブジェクト</span>
<svg class="a" style="left:34.0px;top:558.0px;" width="9" height="9" viewBox="0 0 9 9"><rect x=".5" y=".5" width="8" height="8" rx="1.200" fill="#f7f7f7" stroke="#8f8f8f"/><rect x="1" y="5" width="7" height="3" fill="#e6e6e6"/><path d="M2.200 4.500H6.800" stroke="#2a3a9c" stroke-width="1.200"/><path d="M4.500 2.200V6.800" stroke="#2a3a9c" stroke-width="1.200"/></svg>
<svg class="a" style="left:51px;top:555.0px;" width="14" height="11" viewBox="0 0 14 11"><path d="M0 2.300H4.200L5 0H13.200V11H0z" fill="#dcb67a"/><path d="M5.800 1.300H12.500" stroke="#efdcb9" stroke-width=".9"/></svg>
<span class="t" style="left:71.00px;top:552.54px;font-size:12px;color:#1a1a1a;transform:scaleX(0.7101);">レプリケーション</span>
<svg class="a" style="left:34.0px;top:576.0px;" width="9" height="9" viewBox="0 0 9 9"><rect x=".5" y=".5" width="8" height="8" rx="1.200" fill="#f7f7f7" stroke="#8f8f8f"/><rect x="1" y="5" width="7" height="3" fill="#e6e6e6"/><path d="M2.200 4.500H6.800" stroke="#2a3a9c" stroke-width="1.200"/><path d="M4.500 2.200V6.800" stroke="#2a3a9c" stroke-width="1.200"/></svg>
<svg class="a" style="left:51px;top:573.0px;" width="14" height="11" viewBox="0 0 14 11"><path d="M0 2.300H4.200L5 0H13.200V11H0z" fill="#dcb67a"/><path d="M5.800 1.300H12.500" stroke="#efdcb9" stroke-width=".9"/></svg>
<span class="t" style="left:71.00px;top:570.54px;font-size:12px;color:#1a1a1a;transform:scaleX(0.9577);">管理</span>
<svg class="a" style="left:34.0px;top:594.0px;" width="9" height="9" viewBox="0 0 9 9"><rect x=".5" y=".5" width="8" height="8" rx="1.200" fill="#f7f7f7" stroke="#8f8f8f"/><rect x="1" y="5" width="7" height="3" fill="#e6e6e6"/><path d="M2.200 4.500H6.800" stroke="#2a3a9c" stroke-width="1.200"/><path d="M4.500 2.200V6.800" stroke="#2a3a9c" stroke-width="1.200"/></svg>
<svg class="a" style="left:50.5px;top:590.2px;" width="13" height="14" viewBox="0 0 13 14"><rect x="1.500" y=".5" width="11" height="13" fill="#f2f2f2" stroke="#2b2b2b"/><path d="M0 2.500H1.500M0 4.500H1.500M0 6.500H1.500M0 8.500H1.500M0 10.500H1.500M0 12.500H1.500" stroke="#2b2b2b" stroke-width="1"/><path d="M8.500 3L5.800 6.800H8L6 10.500" fill="none" stroke="#2b2b2b" stroke-width="1.200"/></svg>
<span class="t" style="left:71.00px;top:588.54px;font-size:12px;color:#1a1a1a;transform:scaleX(0.9494);">XEvent Profiler</span>
<div class="a" style="left:356px;top:101px;width:592px;height:26px;background:#c9dcea;border-radius:5px 5px 0 0;"></div>
<div class="a" style="left:355px;top:126px;width:593px;height:486px;background:#fff;border:1px solid #1f3a54;"></div>
<div class="a" style="left:355px;top:101px;width:211px;height:26px;background:#f5f9fd;border:1px solid #1f3a54;border-bottom:none;border-radius:5px 5px 0 0;"></div>
<svg class="a" style="left:565px;top:122px;" width="5" height="5" viewBox="0 0 5 5"><path d="M0 0C0 3 2 4.500 5 4.500" fill="none" stroke="#1f3a54" stroke-width="1"/><path d="M0 0C0 3 2 4.500 5 4.500V6H-1V0z" fill="#f5f9fd" stroke="none"/></svg>
<span class="t" style="left:362.60px;top:106.04px;font-size:12px;color:#111;transform:scaleX(0.9934);">mssql.TestDB...bo.Inventory</span>
<svg class="a" style="left:523.5px;top:109px;" width="12" height="11" viewBox="0 0 12 11"><path d="M6.800 .8L10.800 4.800L9.500 5.300L7.800 7.300L7.500 9.300L2.300 4.200L4.300 3.900L6.300 2.200z" fill="none" stroke="#222" stroke-width="1" stroke-linejoin="round"/><path d="M4.600 7L.8 10.600" stroke="#222" stroke-width="1.100"/></svg>
<svg class="a" style="left:548px;top:109.2px;" width="10" height="10" viewBox="0 0 10 10"><path d="M.3 .3L9.700 9.700M9.700 .3L.3 9.700" stroke="#222" stroke-width="1.100"/></svg>
<div class="a" style="left:907px;top:113px;width:2px;height:2px;background:#222;"></div>
<div class="a" style="left:911px;top:113px;width:2px;height:2px;background:#222;"></div>
<div class="a" style="left:915px;top:113px;width:2px;height:2px;background:#222;"></div>
<svg class="a" style="left:929.5px;top:107.5px;" width="13" height="13" viewBox="0 0 13 13"><g fill="none" stroke="#222" stroke-width="1.100"><circle cx="6.500" cy="6.500" r="1.700"/>
<path d="M5.300 .8H7.700L8.100 2.500L9.400 3.200L11 2.600L12.200 4.700L10.900 5.800V7.200L12.200 8.300L11 10.400L9.400 9.800L8.100 10.500L7.700 12.200H5.300L4.900 10.500L3.600 9.800L2 10.400L.8 8.300L2.100 7.200V5.800L.8 4.700L2 2.600L3.600 3.200L4.900 2.500z" stroke-linejoin="round"/></g></svg>
<div class="a" style="left:356px;top:127px;width:341px;height:1px;background:#a0a0a0;"></div>
<div class="a" style="left:357px;top:148px;width:340px;height:1px;background:#9a9a9a;"></div>
<div class="a" style="left:357px;top:170px;width:340px;height:1px;background:#e3e3e3;"></div>
<div class="a" style="left:357px;top:192px;width:340px;height:1px;background:#e3e3e3;"></div>
<div class="a" style="left:357px;top:214px;width:340px;height:1px;background:#e3e3e3;"></div>
<div class="a" style="left:396px;top:127px;width:1px;height:88px;background:#858585;"></div>
<div class="a" style="left:496px;top:128px;width:1px;height:87px;background:#e0e0e0;"></div>
<div class="a" style="left:596px;top:128px;width:1px;height:87px;background:#e0e0e0;"></div>
<div class="a" style="left:696px;top:128px;width:1px;height:87px;background:#e0e0e0;"></div>
<span class="t" style="left:404.30px;top:131.14px;font-size:12px;color:#1a1a1a;transform:scaleX(1.0381);">id</span>
<span class="t" style="left:504.40px;top:131.14px;font-size:12px;color:#1a1a1a;transform:scaleX(0.9623);">name</span>
<span class="t" style="left:604.40px;top:131.14px;font-size:12px;color:#1a1a1a;transform:scaleX(1.0135);">quantity</span>
<div class="a" style="left:400px;top:152px;width:6.5px;height:15px;background:#0a74da;"></div>
<div class="a" style="left:406.5px;top:152px;width:0.8px;height:15px;background:#e8902a;"></div>
<span class="t" style="left:400.60px;top:152.14px;font-size:12px;color:#fff;transform:scaleX(0.8075);">1</span>
<svg class="a" style="left:363px;top:156px;" width="6" height="9" viewBox="0 0 6 9"><path d="M0 0L5.200 4.500L0 9z" fill="#2b2b2b"/></svg>
<span class="t" style="left:500.60px;top:152.14px;font-size:12px;color:#1a1a1a;transform:scaleX(0.9589);">banana</span>
<span class="t" style="left:601.00px;top:152.14px;font-size:12px;color:#1a1a1a;transform:scaleX(0.8337);">150</span>
<span class="t" style="left:400.50px;top:174.14px;font-size:12px;color:#1a1a1a;transform:scaleX(0.8224);">2</span>
<span class="t" style="left:500.60px;top:174.14px;font-size:12px;color:#1a1a1a;transform:scaleX(0.9819);">orange</span>
<span class="t" style="left:601.00px;top:174.14px;font-size:12px;color:#1a1a1a;transform:scaleX(0.8337);">154</span>
<span class="t" style="left:401.00px;top:195.64px;font-size:12px;color:#1a1a1a;transform:scaleX(0.9124);font-style:italic;">NULL</span>
<span class="t" style="left:501.00px;top:195.64px;font-size:12px;color:#1a1a1a;transform:scaleX(0.9124);font-style:italic;">NULL</span>
<span class="t" style="left:601.00px;top:195.64px;font-size:12px;color:#1a1a1a;transform:scaleX(0.9124);font-style:italic;">NULL</span>
<svg class="a" style="left:365px;top:201.7px;" width="6" height="6" viewBox="0 0 6 6"><path d="M3 0V6M.4 1.500L5.600 4.500M.4 4.500L5.600 1.500" stroke="#4a4a4a" stroke-width="1.500"/><circle cx="3" cy="3" r="2.100" fill="#3a3a3a"/></svg>
<div class="a" style="left:356px;top:586px;width:591px;height:25px;background:linear-gradient(#ffffff,#f0f0f0);"></div>
<svg class="a" style="left:361px;top:592px;" width="11" height="12" viewBox="0 0 11 12"><path d="M.3 0H2.300V12H.3z" fill="#9a9a9a"/><path d="M10.500 0V12L3 6z" fill="#9a9a9a"/></svg>
<svg class="a" style="left:386.5px;top:592px;" width="8" height="12" viewBox="0 0 8 12"><path d="M7.500 0V12L0 6z" fill="#9a9a9a"/></svg>
<div class="a" style="left:405px;top:591px;width:1px;height:15px;background:#9a9a9a;"></div>
<div class="a" style="left:409px;top:587px;width:58px;height:23px;background:#fff;"></div>
<span class="t" style="left:412.80px;top:589.64px;font-size:12px;color:#1a1a1a;transform:scaleX(0.7028);">1</span>
<span class="t" style="left:470.60px;top:589.64px;font-size:12px;color:#1a1a1a;transform:scaleX(1.0642);">/ 2</span>
<div class="a" style="left:492px;top:591px;width:1px;height:15px;background:#9a9a9a;"></div>
<svg class="a" style="left:502px;top:592px;" width="7" height="12" viewBox="0 0 7 12"><path d="M0 0V12L6.800 6z" fill="#2a6fdc"/></svg>
<svg class="a" style="left:523.5px;top:592px;" width="11" height="12" viewBox="0 0 11 12"><path d="M0 0V12L7 6z" fill="#2a6fdc"/><path d="M8.300 0H10.800V12H8.300z" fill="#2a6fdc"/></svg>
<svg class="a" style="left:544px;top:592px;" width="16" height="12" viewBox="0 0 16 12"><path d="M0 0V12L6.500 6z" fill="#2a6fdc"/><path d="M11.700 1.500V9.500M7.700 5.500H15.700M8.800 2.600L14.600 8.400M14.600 2.600L8.800 8.400" stroke="#e8b92a" stroke-width="1.600"/></svg>
<div class="a" style="left:567px;top:591px;width:1px;height:15px;background:#9a9a9a;"></div>
<svg class="a" style="left:573px;top:590px;" width="16" height="16" viewBox="0 0 16 16"><circle cx="8" cy="8" r="7.400" fill="#e4e4e4" stroke="#b8b8b8" stroke-width="1"/><rect x="5" y="5" width="6" height="6" fill="#b0b0b0"/></svg>
<div class="a" style="left:596px;top:591px;width:1px;height:15px;background:#9a9a9a;"></div>
<div class="a" style="left:897px;top:591px;width:1px;height:15px;background:#b0b0b0;"></div>
<div class="a" style="left:943px;top:591px;width:1px;height:15px;background:#b0b0b0;"></div>
<svg class="a" style="left:8px;top:622px;" width="17" height="16" viewBox="0 0 17 16"><path d="M.8 .8H15.700V11.800H10.300L8.200 14.200L6.100 11.800H.8z" fill="#5a6a76" stroke="#e6eaed" stroke-width="1"/></svg>
<span class="t" style="left:36.00px;top:622.14px;font-size:12px;color:#fff;transform:scaleX(0.9580);">準備完了</span>
<svg class="a" style="left:915px;top:624px;" width="13" height="13" viewBox="0 0 13 13"><path d="M2.500 9V5.500C2.500 2.800 4 .8 6.500 .8S10.500 2.800 10.500 5.500V9L11.500 10.200H1.500z" fill="none" stroke="#e6eaed" stroke-width="1"/><path d="M5 10.500C5 12.500 8 12.500 8 10.500" fill="none" stroke="#e6eaed" stroke-width="1"/></svg>
<div class="a" style="left:948px;top:629px;width:1px;height:1px;background:#c8d0d6;"></div>
<div class="a" style="left:946px;top:631px;width:1px;height:1px;background:#c8d0d6;"></div>
<div class="a" style="left:948px;top:631px;width:1px;height:1px;background:#c8d0d6;"></div>
<div class="a" style="left:944px;top:633px;width:1px;height:1px;background:#c8d0d6;"></div>
<div class="a" style="left:946px;top:633px;width:1px;height:1px;background:#c8d0d6;"></div>
<div class="a" style="left:948px;top:633px;width:1px;height:1px;background:#c8d0d6;"></div>
<div class="a" style="left:942px;top:635px;width:1px;height:1px;background:#c8d0d6;"></div>
<div class="a" style="left:944px;top:635px;width:1px;height:1px;background:#c8d0d6;"></div>
<div class="a" style="left:946px;top:635px;width:1px;height:1px;background:#c8d0d6;"></div>
<div class="a" style="left:948px;top:635px;width:1px;height:1px;background:#c8d0d6;"></div>
</body></html>
